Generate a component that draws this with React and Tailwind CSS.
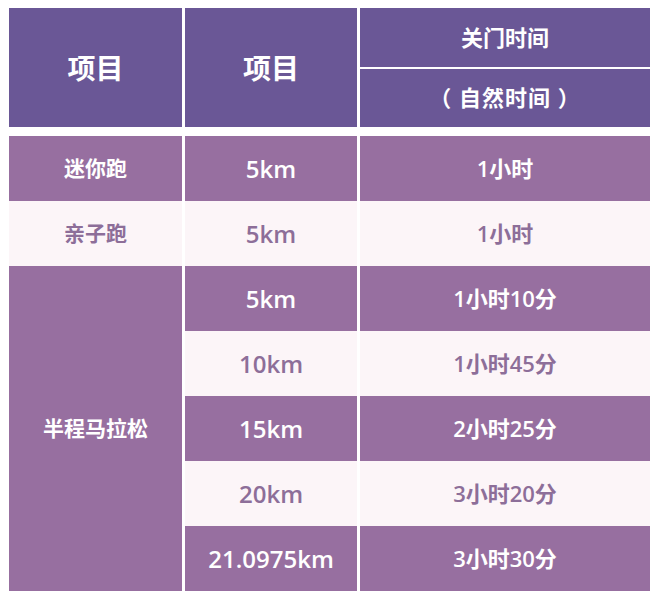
import React from 'react';

const font = { fontFamily: '"Open Sans", "Noto Sans CJK SC", sans-serif' };

const rows = [
  { dist: '5km', time: '1小时10分', dark: true },
  { dist: '10km', time: '1小时45分', dark: false },
  { dist: '15km', time: '2小时25分', dark: true },
  { dist: '20km', time: '3小时20分', dark: false },
  { dist: '21.0975km', time: '3小时30分', dark: true },
];

function Cell({ dark, className = 'text-[21px]', children }) {
  return (
    <div
      className={`flex items-center justify-center h-[65px] font-semibold ${
        dark ? 'bg-[#976fa0] text-white' : 'bg-[#fcf5f8] text-[#8d6e99]'
      } ${className}`}
    >
      {children}
    </div>
  );
}

export default function App() {
  return (
    <div className="w-[660px] h-[601px] bg-white pt-[8px] pl-[9px]" style={font}>
      {/* Header */}
      <div className="grid grid-cols-[173px_172px_290px] gap-x-[3px] h-[119px] text-white font-bold">
        <div className="bg-[#6a5796] flex items-center justify-center text-[28px]">项目</div>
        <div className="bg-[#6a5796] flex items-center justify-center text-[28px]">项目</div>
        <div className="flex flex-col gap-y-[2px]">
          <div className="bg-[#6a5796] flex-1 flex items-center justify-center text-[22px]">关门时间</div>
          <div className="bg-[#6a5796] flex-1 flex items-center justify-center text-[22px] tracking-[1px]">
            （ 自然时间 ）
          </div>
        </div>
      </div>

      {/* Body */}
      <div className="grid grid-cols-[173px_172px_290px] gap-x-[3px] mt-[9px]">
        <Cell dark>迷你跑</Cell>
        <Cell dark className="text-[24px]">5km</Cell>
        <Cell dark className="text-[22px]">1小时</Cell>

        <Cell>亲子跑</Cell>
        <Cell className="text-[24px]">5km</Cell>
        <Cell className="text-[22px]">1小时</Cell>

        <div className="row-span-5 bg-[#976fa0] text-white flex items-center justify-center text-[21px] font-semibold">
          半程马拉松
        </div>
        {rows.map((r) => (
          <React.Fragment key={r.dist}>
            <Cell dark={r.dark} className="text-[24px]">{r.dist}</Cell>
            <Cell dark={r.dark} className="text-[22px]">{r.time}</Cell>
          </React.Fragment>
        ))}
      </div>
    </div>
  );
}
